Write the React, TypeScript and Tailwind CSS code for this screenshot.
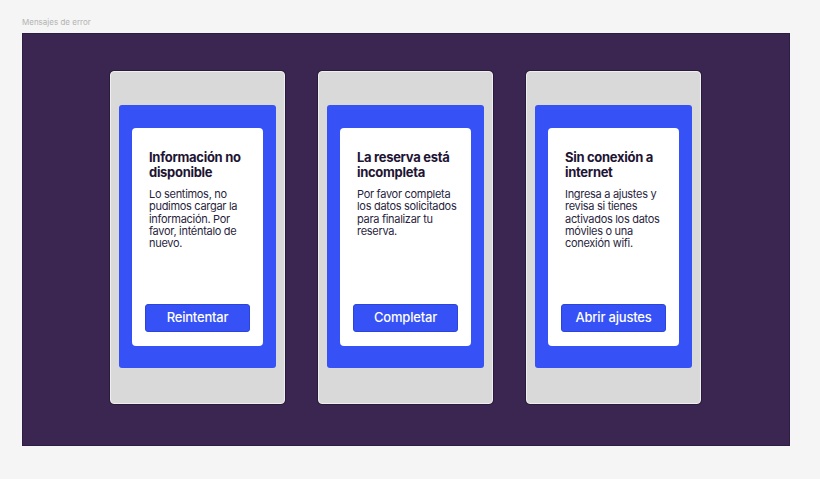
import React from "react";

const cards = [
  {
    title: "Información no disponible",
    body: "Lo sentimos, no pudimos cargar la información. Por favor, inténtalo de nuevo.",
    button: "Reintentar",
  },
  {
    title: "La reserva está incompleta",
    body: "Por favor completa los datos solicitados para finalizar tu reserva.",
    button: "Completar",
  },
  {
    title: "Sin conexión a internet",
    body: "Ingresa a ajustes y revisa si tienes activados los datos móviles o una conexión wifi.",
    button: "Abrir ajustes",
  },
];

export default function App() {
  return (
    <div
      className="w-[820px] h-[479px] bg-[#f5f5f5] overflow-hidden"
      style={{ fontFamily: "Inter, 'Noto Sans', sans-serif" }}
    >
      <div className="pl-[22px] pt-[17px] text-[8px] leading-[10px] text-[#b3b3b3] h-[33px]">
        Mensajes de error
      </div>
      <div className="ml-[22px] w-[768px] h-[413px] bg-[#3a2650] border border-[#2e1d42] flex gap-[33px] pl-[87px] pt-[37px]">
        {cards.map((c) => (
          <div
            key={c.button}
            className="w-[175px] h-[333px] bg-[#d9d9d9] rounded-[4px] border border-[#efefef] shadow-[0_0_0_1px_#2a1a3c] pl-[8px] pt-[33px]"
          >
            <div className="w-[157px] h-[263px] bg-[#3652f6] rounded-[3px] pl-[13px] pt-[23px]">
              <div className="w-[131px] h-[218px] bg-white rounded-[4px] flex flex-col pl-[13px] pb-[14px]">
                <div className="pl-[4px] pr-[9px] pt-[22px]">
                  <div className="text-[13px] leading-[15px] font-bold text-[#1e1433] tracking-[-0.3px]">
                    {c.title}
                  </div>
                  <div className="mt-[8px] text-[11px] leading-[12.25px] text-[#2a1f40] tracking-[-0.3px]">
                    {c.body}
                  </div>
                </div>
                <div className="mt-auto h-[28px] w-[105px] bg-[#3652f6] rounded-[3px] border border-[#2c44d8] flex items-center justify-center text-white text-[13px] font-medium tracking-[-0.2px]">
                  {c.button}
                </div>
              </div>
            </div>
          </div>
        ))}
      </div>
    </div>
  );
}
